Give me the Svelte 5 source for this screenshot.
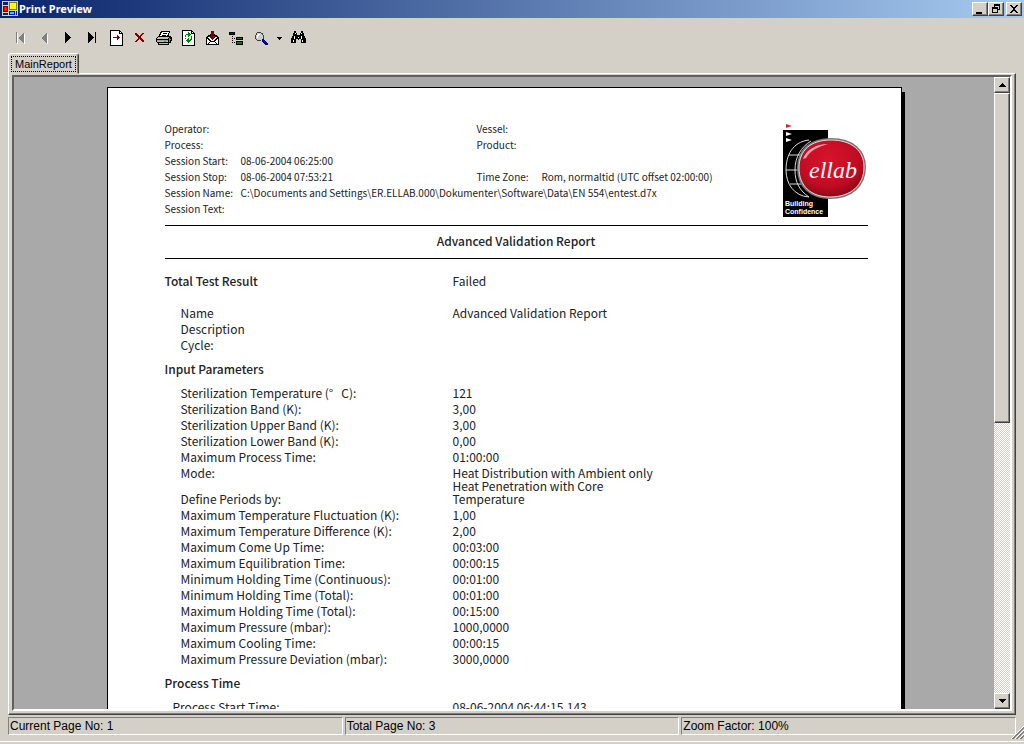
<script lang="ts">
  type Row = { label: string; value?: string | string[] }

  const session = [
    ['Operator:', '', 'Vessel:', ''],
    ['Process:', '', 'Product:', ''],
    ['Session Start:', '08-06-2004 06:25:00'],
    ['Session Stop:', '08-06-2004 07:53:21', 'Time Zone:', 'Rom, normaltid (UTC offset 02:00:00)'],
    ['Session Name:', 'C:\\Documents and Settings\\ER.ELLAB.000\\Dokumenter\\Software\\Data\\EN 554\\entest.d7x'],
    ['Session Text:', '']
  ]

  const summary: Row[] = [
    { label: 'Name', value: 'Advanced Validation Report' },
    { label: 'Description' },
    { label: 'Cycle:' }
  ]

  const parameters: Row[] = [
    { label: 'Sterilization Temperature (°\u00a0\u00a0\u00a0C):', value: '121' },
    { label: 'Sterilization Band (K):', value: '3,00' },
    { label: 'Sterilization Upper Band (K):', value: '3,00' },
    { label: 'Sterilization Lower Band (K):', value: '0,00' },
    { label: 'Maximum Process Time:', value: '01:00:00' },
    { label: 'Mode:', value: ['Heat Distribution with Ambient only', 'Heat Penetration with Core'] },
    { label: 'Define Periods by:', value: 'Temperature' },
    { label: 'Maximum Temperature Fluctuation (K):', value: '1,00' },
    { label: 'Maximum Temperature Difference (K):', value: '2,00' },
    { label: 'Maximum Come Up Time:', value: '00:03:00' },
    { label: 'Maximum Equilibration Time:', value: '00:00:15' },
    { label: 'Minimum Holding Time (Continuous):', value: '00:01:00' },
    { label: 'Minimum Holding Time (Total):', value: '00:01:00' },
    { label: 'Maximum Holding Time (Total):', value: '00:15:00' },
    { label: 'Maximum Pressure (mbar):', value: '1000,0000' },
    { label: 'Maximum Cooling Time:', value: '00:00:15' },
    { label: 'Maximum Pressure Deviation (mbar):', value: '3000,0000' }
  ]

  const processTime: Row[] = [{ label: 'Process Start Time:', value: '08-06-2004 06:44:15.143' }]

  const tools = [
    'First page', 'Previous page', 'Next page', 'Last page', 'Go to page', 'Close view',
    'Print', 'Refresh', 'Export', 'Toggle group tree', 'Zoom', 'Zoom options', 'Find'
  ]

  const status = ['Current Page No: 1', 'Total Page No: 3', 'Zoom Factor: 100%']

  function lines(value?: string | string[]): string[] {
    return Array.isArray(value) ? value : [value ?? '']
  }
</script>

{#snippet rows(items: Row[])}
  {#each items as item}
    <div class="row">
      <dt>{item.label}</dt>
      <dd>
        {#each lines(item.value) as line}
          <div>{line}</div>
        {/each}
      </dd>
    </div>
  {/each}
{/snippet}

{#snippet toolIcon(name: string)}
  <svg width="16" height="16" viewBox="0 0 16 16" shape-rendering="crispEdges" aria-hidden="true">
    {#if name === 'First page'}
      <path d="M5 3h1v11h-1zM7 9l6-6v11z" fill="#fff" />
      <path d="M4 2h1v11h-1zM6 8l6-6v11z" fill="#808080" />
    {:else if name === 'Previous page'}
      <path d="M6 9l6-6v11z" fill="#fff" />
      <path d="M5 8l6-6v11z" fill="#808080" />
    {:else if name === 'Next page'}
      <path d="M5 2l6 6-6 5z" />
    {:else if name === 'Last page'}
      <path d="M4 2l6 6-6 5zM11 2h1v11h-1z" />
    {:else if name === 'Go to page'}
      <path d="M2 0h10v1h1v1h1v1h1v13H2z" />
      <path d="M3 1h8v3h3v11H3z" fill="#fff" />
      <path d="M12 2h1v1h-1z" fill="#fff" />
      <path d="M5 7h4V5h1v1h1v1h1v1h-1v1h-1v1H9V8H5z" fill="#800000" />
    {:else if name === 'Close view'}
      <path d="M3 3h2v1h1v1h1v1h1V5h1V4h1V3h2v1h-1v1h-1v1H9v2h1v1h1v1h1v2h-2v-1H9v-1H8V9H7v1H6v1H5v1H3v-1h1v-1h1V9h1V7H5V6H4V5H3z" fill="#800000" />
    {:else if name === 'Print'}
      <path d="M5 1h9v2h-1v3h2v1h1v4h-1v2h-2v2H2v-2H1v-1H0V8h1V7h1V6h1V4h1V2h1z" />
      <path d="M6 2h7v1h-1v2h-1v1H4V5h1V3h1z" fill="#fff" />
      <path d="M7 3h4v1H7zM6 5h4v1H6z" fill="#000" />
      <path d="M2 7h11v1h-1v1H1V8h1zM1 11h11v1H1zM3 13h9v1H3z" fill="#c0c0c0" />
      <path d="M13 8h1v1h1v1h-1v2h-1z" fill="#808080" />
      <path d="M1 10h11v1H1z" fill="#a0a0a0" />
      <path d="M8 11h2v1H8z" fill="#00e000" />
    {:else if name === 'Refresh'}
      <path d="M2 0h10v1h1v1h1v1h1v13H2z" />
      <path d="M3 1h8v3h3v11H3z" fill="#fff" />
      <path d="M12 2h1v1h-1z" fill="#fff" />
      <path d="M8 2h1v1h1v1h1v1h-1v1H9v1H8V5H6v2H5V5h1V4h2zM5 8h1v1H5zM11 6h1v4h-1v1h-1v1H9v1H8v-1H7v-1H6v-1h1V9h1V8h1v2h1V9h1z" fill="#008000" />
    {:else if name === 'Export'}
      <path d="M2 7h1V6h1V5h2V4h5v1h2v1h1v1h1v8H2z" />
      <path d="M3 9h1v1h1v1h1v1H5v1H4v1H3zM14 9h-1v1h-1v1h-1v1h1v1h1v1h1zM5 14v-1h1v-1h5v1h1v1z" fill="#fff" />
      <path d="M4 7h1V6h7v1h1v1h-1v1h-1v1h-1v1H7v-1H6V9H5V8H4z" fill="#fff" />
      <path d="M7 1h3v5h2v1h-1v1h-1v1H9v1H8V9H7V8H6V7H5V6h2z" fill="#800000" />
    {:else if name === 'Toggle group tree'}
      <path d="M1 2h6v3H1zM8 7h7v3H8zM8 11h7v4H8z" />
      <path d="M2 3h4v1H2z" fill="#0000ff" />
      <path d="M9 8h5v1H9zM9 12h5v2H9z" fill="#008000" />
      <path d="M4 6h1v1H4zM4 8h1v1H4zM6 8h1v1H6zM4 10h1v1H4zM4 12h1v1H4zM6 12h1v1H6z" />
    {:else if name === 'Zoom'}
      <path d="M5 2h4v1h2v2h1v4h-1v1H9v1H5v-1H4V9H3V5h1V3h1z" fill="#404040" />
      <path d="M5 3h4v1h1v1h1v4h-1v1H5V9H4V5h1z" fill="#c8d0d0" />
      <path d="M6 4h2v1H7v1H6v2H5V5h1z" fill="#fff" />
      <path d="M10 9h2v1h1v1h1v1h1v1h1v2h-3v-1h-1v-1h-1v-1h-1z" fill="#000080" />
      <path d="M11 10h1v1h1v1h1v1h-1v-1h-1v-1h-1z" fill="#0000ff" />
    {:else if name === 'Zoom options'}
      <path d="M6 7h5v1h-1v1H9v1H8V9H7V8H6z" />
    {:else}
      <path d="M4 1h2v2h1v2h3V3h1V1h2v2h1v3h1v2h1v5h-5V9H9v1H8V9H6v4H1V8h1V6h1V3h1z" />
      <path d="M5 3h1v1H5zM4 6h1v3H4zM11 3h1v1h-1zM11 6h1v3h-1zM3 10h1v2H3zM12 10h1v2h-1zM8 7h1v1H8z" fill="#fff" />
    {/if}
  </svg>
{/snippet}

<div class="window">
  <header class="titlebar">
    <svg width="16" height="16" viewBox="0 0 16 16" shape-rendering="crispEdges" aria-hidden="true">
      <path d="M0 0h16v15H0z" fill="#d4d0c8" />
      <path d="M1 1h5v3H1zM1 12h5v2H1z" fill="#0a246a" />
      <path d="M7 1h8v8H7z" fill="#808000" />
      <path d="M8 2h6v6H8z" fill="#ffff00" />
      <path d="M1 5h5v6H1z" fill="#800000" />
      <path d="M2 6h3v4H2z" fill="#ff0000" />
      <path d="M3 6h1v3H3z" fill="#ff00ff" />
      <path d="M7 10h6v4H7z" fill="#0000ff" />
      <path d="M8 11h4v2H8z" fill="#00e0ff" />
      <path d="M14 10h1v4h-1z" fill="#0a246a" />
    </svg>
    <h1>Print Preview</h1>
    <div class="caption-buttons">
      <button class="raised" aria-label="Minimize">
        <svg width="12" height="10" viewBox="0 0 12 10" shape-rendering="crispEdges"><path d="M2 8h6v2H2z" /></svg>
      </button>
      <button class="raised" aria-label="Restore">
        <svg width="12" height="10" viewBox="0 0 12 10" shape-rendering="crispEdges">
          <path d="M4 0h6v6H8V5h1V2H5v1H4zM2 3h6v6H2zM3 5v3h4V5z" fill-rule="evenodd" />
        </svg>
      </button>
      <button class="raised close" aria-label="Close">
        <svg width="12" height="10" viewBox="0 0 12 10" shape-rendering="crispEdges">
          <path d="M2 1h2v1h1v1h2V2h1V1h2v1H9v1H8v1H7v2h1v1h1v1h1v1H8V8H7V7H5v1H4v1H2V8h1V7h1V6h1V4H4V3H3V2H2z" />
        </svg>
      </button>
    </div>
  </header>

  <div class="toolbar" role="toolbar" aria-label="Report tools">
    {#each tools as name}
      <button class="tool" class:narrow={name === 'Zoom options'} aria-label={name} disabled={name === 'First page' || name === 'Previous page'}>
        {@render toolIcon(name)}
      </button>
    {/each}
  </div>

  <div class="tabs" role="tablist">
    <button class="tab" role="tab" aria-selected="true"><span>MainReport</span></button>
  </div>

  <main class="panel">
    <div class="viewer">
      <div class="canvas">
        <article class="page">
          <div class="masthead">
            <dl class="session">
              {#each session as [label, value, label2, value2]}
                <div class="session-row" class:wide={!label2}>
                  <dt>{label}</dt>
                  <dd>{value}</dd>
                  {#if label2}
                    <dt>{label2}</dt>
                    <dd>{value2}</dd>
                  {/if}
                </div>
              {/each}
            </dl>
            <svg class="logo" width="86" height="96" viewBox="0 0 86 96" role="img" aria-label="ellab Building Confidence">
              <defs>
                <radialGradient id="badge" cx="0.45" cy="0.35" r="0.7">
                  <stop offset="0" stop-color="#d8142c" />
                  <stop offset="0.65" stop-color="#c00c22" />
                  <stop offset="1" stop-color="#7c0614" />
                </radialGradient>
              </defs>
              <path d="M4 2l6 2-6 2z" fill="#c8303c" />
              <path d="M1 8h45v87H1z" fill="#000" />
              <path d="M4 10l6 2-6 2zM4 16l6 2-6 2z" fill="#fff" />
              <g fill="none" stroke="#ddd" stroke-width="1">
                <path d="M27 18C10 20 4 34 4 48s8 26 23 27" />
                <path d="M29 19C19 25 13 35 13 48s5 21 14 27" />
                <path d="M4 48h14M7 33h13M8 62h12" />
              </g>
              <path d="M16 46c0-19 13-29 33-29 22 0 34 12 34 28 0 19-14 31-35 31-20 0-32-12-32-30z" fill="url(#badge)" stroke="#777" stroke-width="2" />
              <path d="M17 46c0-18 12-28 32-28 21 0 33 11 33 27 0 18-13 30-34 30-19 0-31-11-31-29z" fill="none" stroke="#f0d8d8" stroke-width="1" />
              <path d="M21 37c3-9 13-15 25-15-11 3-18 7-22 14z" fill="#f4a0a8" />
              <text x="27" y="56" class="logo-name">ellab</text>
              <text x="3" y="84" class="logo-tag">Building</text>
              <text x="3" y="92" class="logo-tag">Confidence</text>
            </svg>
          </div>

          <h2 class="title">Advanced Validation Report</h2>

          <dl class="result">
            <div class="row">
              <dt>Total Test Result</dt>
              <dd>Failed</dd>
            </div>
          </dl>
          <dl>{@render rows(summary)}</dl>

          <h3>Input Parameters</h3>
          <dl>{@render rows(parameters)}</dl>

          <h3>Process Time</h3>
          <dl class="process">{@render rows(processTime)}</dl>
        </article>
      </div>

      <div class="scrollbar">
        <button class="raised arrow" aria-label="Scroll up">
          <svg width="7" height="4" viewBox="0 0 7 4" shape-rendering="crispEdges"><path d="M3 0h1v1h1v1h1v1h1v1H0V3h1V2h1V1h1z" /></svg>
        </button>
        <div class="track"><div class="raised thumb"></div></div>
        <button class="raised arrow" aria-label="Scroll down">
          <svg width="7" height="4" viewBox="0 0 7 4" shape-rendering="crispEdges"><path d="M0 0h7v1H6v1H5v1H4v1H3V3H2V2H1V1H0z" /></svg>
        </button>
      </div>
    </div>
  </main>

  <footer class="statusbar">
    {#each status as text}
      <div class="status">{text}</div>
    {/each}
    <svg class="grip" width="13" height="13" viewBox="0 0 13 13" aria-hidden="true">
      <path d="M0 13L13 0M4 13l9-9M8 13l5-5" stroke="#fff" />
      <path d="M1 13L13 1M2 13L13 2M5 13l8-8M6 13l7-7M9 13l4-4M10 13l3-3" stroke="#808080" />
    </svg>
  </footer>
</div>

<style>
  :global(body) {
    overflow: hidden;
    background: #d4d0c8;
  }

  .window {
    display: flex;
    flex-direction: column;
    height: 100vh;
    background: #d4d0c8;
    color: #000;
    font: 12px/16px 'Liberation Sans', Arial, sans-serif;
  }

  button {
    padding: 0;
    border: 0;
    background: #d4d0c8;
    color: inherit;
    font: inherit;
  }

  svg {
    display: block;
  }

  h1,
  h2,
  h3,
  dl,
  dd {
    margin: 0;
  }

  .raised {
    display: flex;
    align-items: center;
    justify-content: center;
    box-sizing: border-box;
    background: #d4d0c8;
    border: 1px solid;
    border-color: #fff #404040 #404040 #fff;
    box-shadow: inset -1px -1px #808080;
  }

  .titlebar {
    display: flex;
    align-items: center;
    gap: 1px;
    height: 18px;
    padding: 0 2px;
    background: linear-gradient(to right, #0a246a, #a6caf0);
  }

  .titlebar h1 {
    flex: 1;
    color: #fff;
    font: bold 11px/16px 'Noto Sans', Tahoma, sans-serif;
  }

  .caption-buttons {
    display: flex;
  }

  .caption-buttons button {
    width: 16px;
    height: 14px;
  }

  .caption-buttons .close {
    margin-left: 2px;
  }

  .toolbar {
    display: flex;
    align-items: center;
    height: 31px;
    padding: 4px 8px 0;
  }

  .tool {
    display: flex;
    align-items: center;
    justify-content: center;
    width: 24px;
    height: 24px;
  }

  .tool.narrow {
    width: 14px;
  }

  .tabs {
    display: flex;
    padding: 0 8px;
  }

  .tab {
    position: relative;
    height: 21px;
    margin-bottom: -1px;
    padding: 2px 2px 1px;
    border: 1px solid;
    border-color: #fff #404040 transparent #fff;
    border-radius: 3px 3px 0 0;
    box-shadow: inset -1px 0 #808080;
    font-size: 11px;
    z-index: 1;
  }

  .tab span {
    display: block;
    padding: 0 3px;
    border: 1px dotted #000;
    line-height: 14px;
  }

  .panel {
    display: flex;
    flex: 1;
    min-height: 0;
    margin: 0 8px;
    padding: 1px 3px 3px;
    border: 1px solid;
    border-color: #fff #404040 #404040 #fff;
    box-shadow: inset -1px -1px #808080;
  }

  .viewer {
    display: flex;
    flex: 1;
    min-width: 0;
    border: 2px solid;
    border-color: #606060 #fff #fff #606060;
  }

  .canvas {
    flex: 1;
    min-width: 0;
    overflow: hidden;
    padding-top: 10px;
    background: #a9a9a9;
  }

  .page {
    box-sizing: border-box;
    width: 795px;
    min-height: 1123px;
    margin: 0 auto;
    padding: 34px 33px 34px 57px;
    border: 1px solid #000;
    background: #fff;
    box-shadow: 3px 5px #000;
    color: #222;
    font: 12px/13px 'Noto Sans CJK JP', 'Noto Sans', sans-serif;
  }

  .masthead {
    display: flex;
    justify-content: space-between;
    padding-bottom: 7px;
    border-bottom: 1px solid #000;
  }

  .session {
    flex: 1;
    min-width: 0;
    font-size: 10px;
  }

  .session-row {
    display: grid;
    grid-template-columns: 76px 236px 65px 1fr;
    min-height: 16px;
    white-space: nowrap;
  }

  .session-row.wide {
    grid-template-columns: 76px 1fr;
  }

  .logo-name {
    fill: #fff;
    font: italic 24px 'Liberation Serif', serif;
  }

  .logo-tag {
    fill: #fff;
    font: bold 7px 'Liberation Sans', sans-serif;
  }

  .title {
    padding-bottom: 2px;
    border-bottom: 1px solid #000;
    font-size: 12px;
    font-weight: 500;
    line-height: 30px;
    text-align: center;
  }

  .row {
    display: grid;
    grid-template-columns: 272px 1fr;
    min-height: 16px;
    margin-left: 16px;
  }

  .result {
    margin: 15px 0 16px;
  }

  .result .row {
    grid-template-columns: 288px 1fr;
    margin-left: 0;
  }

  .result dt {
    font-weight: 500;
  }

  h3 {
    margin: 7px 0 9px;
    font-size: 12px;
    font-weight: 500;
    line-height: 16px;
  }

  .process .row {
    grid-template-columns: 280px 1fr;
    margin-left: 8px;
  }

  .scrollbar {
    display: flex;
    flex-direction: column;
    width: 16px;
  }

  .arrow {
    height: 16px;
  }

  .track {
    flex: 1;
    background: repeating-conic-gradient(#fff 0 25%, #d4d0c8 0 50%) 0 0 / 2px 2px;
  }

  .thumb {
    height: 55%;
  }

  .statusbar {
    position: relative;
    display: flex;
    gap: 2px;
    padding: 2px 8px 6px;
    margin-bottom: 2px;
    border-bottom: 1px solid #fff;
  }

  .status {
    flex: 1;
    padding: 1px 1px 0;
    border: 1px solid;
    border-color: #808080 #fff #fff #808080;
    line-height: 15px;
  }

  .grip {
    position: absolute;
    right: 0;
    bottom: 2px;
  }
</style>
